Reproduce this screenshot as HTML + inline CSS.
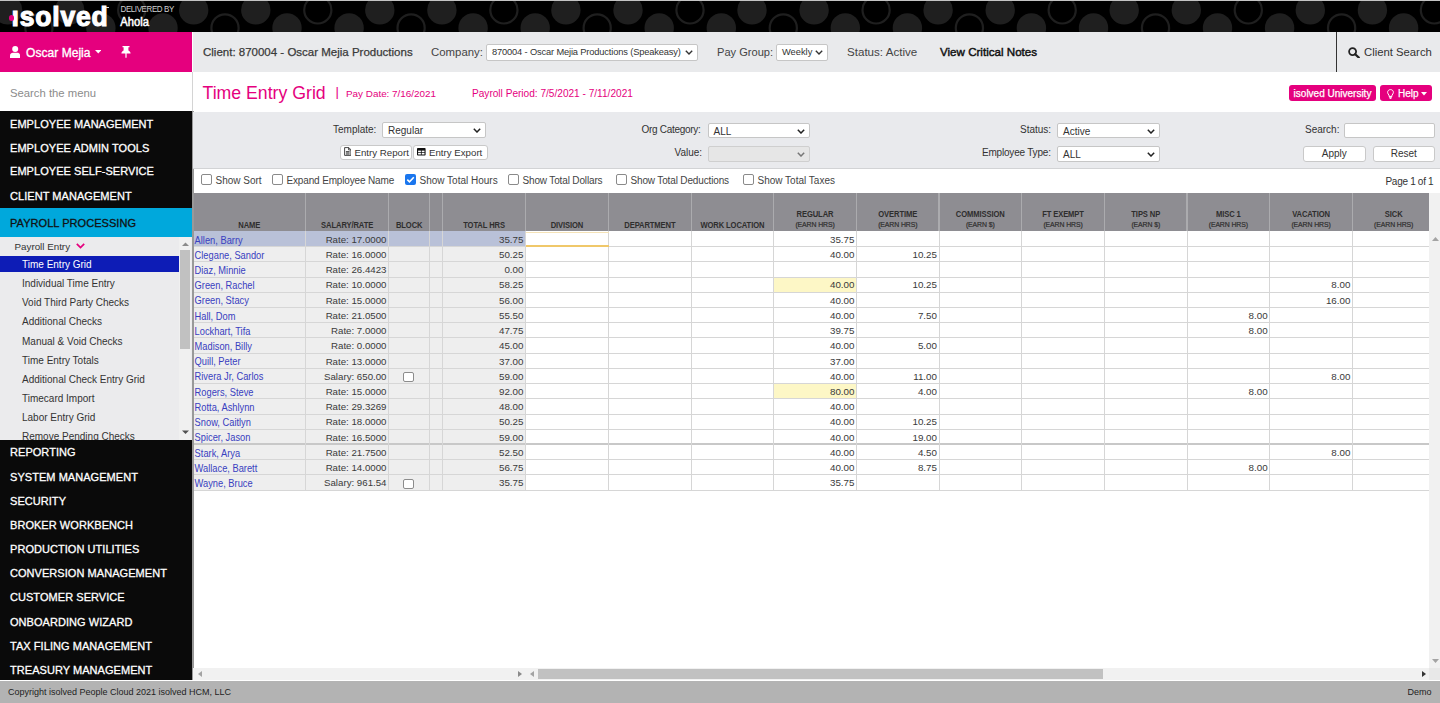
<!DOCTYPE html><html><head><meta charset="utf-8"><style>
*{box-sizing:border-box;margin:0;padding:0}
html,body{width:1440px;height:703px;overflow:hidden;background:#fff;font-family:"Liberation Sans",sans-serif;color:#333}
.a{position:absolute;white-space:nowrap}
.mi{position:absolute;left:10px;color:#fff;font-weight:normal;font-size:11px;line-height:14px;letter-spacing:0.05px;-webkit-text-stroke:0.3px #fff}
.si{position:absolute;left:22px;font-size:10px;color:#333;line-height:12px}
.lbl{position:absolute;font-size:10px;color:#333;line-height:14px;white-space:nowrap}
.sel{position:absolute;background:#fff;border:1px solid #c6c6c6;border-radius:2px;font-size:10px;color:#333;padding-left:5px;line-height:14px;white-space:nowrap}
.sel svg{position:absolute;right:4px;top:5px}
.btn{position:absolute;background:#fff;border:1px solid #c9c9c9;border-radius:3px;font-size:10px;color:#333;text-align:center;line-height:14px;white-space:nowrap}
.cb{position:absolute;width:11px;height:11px;border:1px solid #8a8a8a;border-radius:2px;background:#fff}
.hd{position:absolute;font-size:7.6px;font-weight:bold;color:#2e2e2e;text-align:center;line-height:9px;white-space:nowrap;letter-spacing:-0.1px;transform:scaleY(1.17);transform-origin:50% 7px}
.hd2{color:#2a2a2a !important}
</style></head><body>
<div class="a" style="left:0;top:0;width:1440px;height:32px;background:#000;border-top:1px solid #c4c4c4;overflow:hidden">
<svg width="1440" height="31" style="position:absolute;left:0;top:0"><circle cx="7.6" cy="8.9" r="14.7" fill="#1f1f1f"/><circle cx="69.7" cy="8.9" r="14.7" fill="#1f1f1f"/><circle cx="131.7" cy="8.9" r="13.6" fill="none" stroke="#1f1f1f" stroke-width="2.2"/><circle cx="193.7" cy="8.9" r="14.7" fill="#1f1f1f"/><circle cx="255.8" cy="8.9" r="14.7" fill="#1f1f1f"/><circle cx="317.8" cy="8.9" r="13.6" fill="none" stroke="#1f1f1f" stroke-width="2.2"/><circle cx="379.8" cy="8.9" r="14.7" fill="#1f1f1f"/><circle cx="441.9" cy="8.9" r="14.7" fill="#1f1f1f"/><circle cx="503.9" cy="8.9" r="13.6" fill="none" stroke="#1f1f1f" stroke-width="2.2"/><circle cx="565.9" cy="8.9" r="14.7" fill="#1f1f1f"/><circle cx="628.0" cy="8.9" r="14.7" fill="#1f1f1f"/><circle cx="690.0" cy="8.9" r="13.6" fill="none" stroke="#1f1f1f" stroke-width="2.2"/><circle cx="752.0" cy="8.9" r="14.7" fill="#1f1f1f"/><circle cx="814.1" cy="8.9" r="14.7" fill="#1f1f1f"/><circle cx="876.1" cy="8.9" r="13.6" fill="none" stroke="#1f1f1f" stroke-width="2.2"/><circle cx="938.1" cy="8.9" r="14.7" fill="#1f1f1f"/><circle cx="1000.2" cy="8.9" r="14.7" fill="#1f1f1f"/><circle cx="1062.2" cy="8.9" r="13.6" fill="none" stroke="#1f1f1f" stroke-width="2.2"/><circle cx="1124.2" cy="8.9" r="14.7" fill="#1f1f1f"/><circle cx="1186.3" cy="8.9" r="14.7" fill="#1f1f1f"/><circle cx="1248.3" cy="8.9" r="13.6" fill="none" stroke="#1f1f1f" stroke-width="2.2"/><circle cx="1310.3" cy="8.9" r="14.7" fill="#1f1f1f"/><circle cx="1372.4" cy="8.9" r="14.7" fill="#1f1f1f"/><circle cx="1434.4" cy="8.9" r="13.6" fill="none" stroke="#1f1f1f" stroke-width="2.2"/><circle cx="38.9" cy="26.9" r="13.6" fill="none" stroke="#1f1f1f" stroke-width="2.2"/><circle cx="100.9" cy="26.9" r="14.7" fill="#1f1f1f"/><circle cx="163.0" cy="26.9" r="14.7" fill="#1f1f1f"/><circle cx="225.0" cy="26.9" r="13.6" fill="none" stroke="#1f1f1f" stroke-width="2.2"/><circle cx="287.0" cy="26.9" r="14.7" fill="#1f1f1f"/><circle cx="349.1" cy="26.9" r="14.7" fill="#1f1f1f"/><circle cx="411.1" cy="26.9" r="13.6" fill="none" stroke="#1f1f1f" stroke-width="2.2"/><circle cx="473.1" cy="26.9" r="14.7" fill="#1f1f1f"/><circle cx="535.2" cy="26.9" r="14.7" fill="#1f1f1f"/><circle cx="597.2" cy="26.9" r="13.6" fill="none" stroke="#1f1f1f" stroke-width="2.2"/><circle cx="659.2" cy="26.9" r="14.7" fill="#1f1f1f"/><circle cx="721.3" cy="26.9" r="14.7" fill="#1f1f1f"/><circle cx="783.3" cy="26.9" r="13.6" fill="none" stroke="#1f1f1f" stroke-width="2.2"/><circle cx="845.3" cy="26.9" r="14.7" fill="#1f1f1f"/><circle cx="907.4" cy="26.9" r="14.7" fill="#1f1f1f"/><circle cx="969.4" cy="26.9" r="13.6" fill="none" stroke="#1f1f1f" stroke-width="2.2"/><circle cx="1031.4" cy="26.9" r="14.7" fill="#1f1f1f"/><circle cx="1093.5" cy="26.9" r="14.7" fill="#1f1f1f"/><circle cx="1155.5" cy="26.9" r="13.6" fill="none" stroke="#1f1f1f" stroke-width="2.2"/><circle cx="1217.5" cy="26.9" r="14.7" fill="#1f1f1f"/><circle cx="1279.6" cy="26.9" r="14.7" fill="#1f1f1f"/><circle cx="1341.6" cy="26.9" r="13.6" fill="none" stroke="#1f1f1f" stroke-width="2.2"/><circle cx="1403.6" cy="26.9" r="14.7" fill="#1f1f1f"/></svg>
</div>
<div class="a" style="left:11.6px;top:0.5px;font-size:26.5px;font-weight:bold;color:#fff;letter-spacing:0.8px;line-height:32px;-webkit-text-stroke:1.1px #fff;transform:scaleY(1.06);transform-origin:0 24px">ısolved</div>
<div class="a" style="left:8.6px;top:15.3px;width:5.9px;height:5.9px;border-radius:50%;background:#e5007e;"></div>
<div class="a" style="left:105.5px;top:6.5px;width:3.5px;height:0.8px;background:#ddd"></div>
<div class="a" style="left:120.5px;top:5.4px;font-size:8px;color:#d0d0d0;line-height:10px;letter-spacing:-0.4px;transform:scaleY(1.18);transform-origin:0 8px">DELIVERED BY</div>
<div class="a" style="left:120.3px;top:15px;font-size:11.2px;color:#fff;line-height:14px;-webkit-text-stroke:0.45px #fff;transform:scaleY(1.1);transform-origin:0 11px">Ahola</div>
<div class="a" style="left:0;top:32px;width:192px;height:648px;background:#0a0a0a"></div>
<div class="a" style="left:0;top:32px;width:192px;height:40px;background:#e5007e"></div>
<svg class="a" style="left:10px;top:46px" width="10.2" height="12" viewBox="0 0 10.2 12"><circle cx="5.2" cy="3.1" r="3" fill="#fff"/><path d="M0 12 V9.4 C0 7.7 1.5 6.8 2.8 6.8 H7.4 C8.7 6.8 10.2 7.7 10.2 9.4 V12 Z" fill="#fff"/></svg>
<div class="a" style="left:26px;top:46px;font-size:12px;color:#fff;line-height:14px;letter-spacing:0.05px;-webkit-text-stroke:0.35px #fff">Oscar Mejia</div>
<svg class="a" style="left:94.5px;top:50px" width="6.5" height="4" viewBox="0 0 6.5 4"><path d="M0 0 H6.5 L3.25 3.5 Z" fill="#fff"/></svg>
<svg class="a" style="left:121px;top:46px" width="10" height="12" viewBox="0 0 10 12"><path d="M1.5 0 H8.5 V1.3 H7.4 V4.6 C8.6 5.3 9.6 6.3 9.6 7.6 H5.6 V11.5 L5 12 L4.4 11.5 V7.6 H0.4 C0.4 6.3 1.4 5.3 2.6 4.6 V1.3 H1.5 Z" fill="#fff"/></svg>
<div class="a" style="left:0;top:72px;width:192px;height:39px;background:#fff"></div>
<div class="a" style="left:10px;top:87px;font-size:11.3px;color:#8c8c8c;line-height:13px">Search the menu</div>
<div class="mi" style="top:117.1px">EMPLOYEE MANAGEMENT</div>
<div class="mi" style="top:140.6px">EMPLOYEE ADMIN TOOLS</div>
<div class="mi" style="top:164.3px">EMPLOYEE SELF-SERVICE</div>
<div class="mi" style="top:188.6px">CLIENT MANAGEMENT</div>
<div class="a" style="left:0;top:208px;width:192px;height:29.7px;background:#00a8dc"></div>
<div class="mi" style="top:216px;color:#111;-webkit-text-stroke:0.3px #111">PAYROLL PROCESSING</div>
<div class="a" style="left:0;top:237px;width:192px;height:203px;background:#ebebed;overflow:hidden">
<div class="a" style="left:14.5px;top:4px;font-size:9.8px;color:#333;line-height:12px">Payroll Entry</div>
<svg class="a" style="left:76px;top:6px" width="9" height="6" viewBox="0 0 9 6"><path d="M0.8 0.8 L4.5 4.6 L8.2 0.8" fill="none" stroke="#e5007e" stroke-width="1.7"/></svg>
<div class="a" style="left:0;top:18.5px;width:179px;height:16px;background:#0d1cb6"></div>
<div class="si" style="top:22.3px;color:#fff">Time Entry Grid</div>
<div class="si" style="top:41.3px;color:#333">Individual Time Entry</div>
<div class="si" style="top:60.4px;color:#333">Void Third Party Checks</div>
<div class="si" style="top:79.4px;color:#333">Additional Checks</div>
<div class="si" style="top:98.5px;color:#333">Manual &amp; Void Checks</div>
<div class="si" style="top:117.5px;color:#333">Time Entry Totals</div>
<div class="si" style="top:136.5px;color:#333">Additional Check Entry Grid</div>
<div class="si" style="top:155.6px;color:#333">Timecard Import</div>
<div class="si" style="top:174.6px;color:#333">Labor Entry Grid</div>
<div class="si" style="top:193.7px;color:#333">Remove Pending Checks</div>
<div class="a" style="left:178.7px;top:0;width:12px;height:203px;background:#f0f0f0"></div>
<svg class="a" style="left:182px;top:5px" width="7" height="5"><path d="M0 4 L3.5 0.5 L7 4 Z" fill="#8a8a8a"/></svg>
<div class="a" style="left:180.4px;top:13px;width:9.4px;height:99px;background:#c1c1c1"></div>
<svg class="a" style="left:182px;top:193px" width="7" height="5"><path d="M0 0.5 L3.5 4 L7 0.5 Z" fill="#505050"/></svg>
</div>
<div class="mi" style="top:445.4px">REPORTING</div>
<div class="mi" style="top:469.6px">SYSTEM MANAGEMENT</div>
<div class="mi" style="top:493.7px">SECURITY</div>
<div class="mi" style="top:517.9px">BROKER WORKBENCH</div>
<div class="mi" style="top:542.1px">PRODUCTION UTILITIES</div>
<div class="mi" style="top:566.2px">CONVERSION MANAGEMENT</div>
<div class="mi" style="top:590.4px">CUSTOMER SERVICE</div>
<div class="mi" style="top:614.6px">ONBOARDING WIZARD</div>
<div class="mi" style="top:638.8px">TAX FILING MANAGEMENT</div>
<div class="mi" style="top:662.9px">TREASURY MANAGEMENT</div>
<div class="a" style="left:192px;top:72px;width:1px;height:39px;background:#d4d4d4"></div>
<div class="a" style="left:192px;top:111px;width:1.5px;height:569px;background:#999"></div>
<div class="a" style="left:193px;top:32px;width:1247px;height:40px;background:#e9eaec"></div>
<div class="a" style="left:203px;top:45px;font-size:11.5px;color:#3a3a3a;line-height:14px;-webkit-text-stroke:0.25px #3a3a3a">Client: 870004 - Oscar Mejia Productions</div>
<div class="a" style="left:431px;top:45px;font-size:11.4px;color:#444;line-height:14px">Company:</div>
<div class="sel" style="left:486px;top:44px;width:212px;height:17px;font-size:9.3px;padding-left:5px;line-height:14px;letter-spacing:-0.15px">870004 - Oscar Mejia Productions (Speakeasy)<svg width="8" height="5" viewBox="0 0 8 5"><path d="M0.8 0.8 L4 4 L7.2 0.8" fill="none" stroke="#333" stroke-width="1.4"/></svg></div>
<div class="a" style="left:717px;top:45px;font-size:11.1px;color:#444;line-height:14px">Pay Group:</div>
<div class="sel" style="left:776px;top:44px;width:52px;height:17px;font-size:9.3px;padding-left:5px;line-height:14px">Weekly<svg width="8" height="5" viewBox="0 0 8 5"><path d="M0.8 0.8 L4 4 L7.2 0.8" fill="none" stroke="#333" stroke-width="1.4"/></svg></div>
<div class="a" style="left:847px;top:45px;font-size:11.6px;color:#444;line-height:14px">Status: Active</div>
<div class="a" style="left:940px;top:45px;font-size:11.6px;color:#111;line-height:14px;-webkit-text-stroke:0.45px #111">View Critical Notes</div>
<div class="a" style="left:1336px;top:32px;width:1px;height:40px;background:#333"></div>
<svg class="a" style="left:1348px;top:47px" width="12" height="11" viewBox="0 0 12 11"><circle cx="4.6" cy="4.6" r="3.5" fill="none" stroke="#222" stroke-width="1.8"/><path d="M7.2 7.2 L10.8 10.6" stroke="#222" stroke-width="2.2" stroke-linecap="round"/></svg>
<div class="a" style="left:1364px;top:45px;font-size:11.3px;color:#333;line-height:14px">Client Search</div>
<div class="a" style="left:202.5px;top:83px;font-size:17.7px;color:#e5007e;line-height:20px">Time Entry Grid</div>
<div class="a" style="left:335.5px;top:85.3px;font-size:13px;color:#e5007e;line-height:14px">|</div>
<div class="a" style="left:346px;top:88px;font-size:9.9px;color:#e5007e;line-height:12px">Pay Date: 7/16/2021</div>
<div class="a" style="left:472px;top:88px;font-size:10.1px;color:#e5007e;line-height:12px">Payroll Period: 7/5/2021 - 7/11/2021</div>
<div class="a" style="left:1289px;top:85px;width:87px;height:16.3px;background:#e5007e;border-radius:3px;color:#fff;font-size:10px;line-height:18px;text-align:center;-webkit-text-stroke:0.25px #fff">isolved University</div>
<div class="a" style="left:1380px;top:85px;width:52px;height:16.3px;background:#e5007e;border-radius:3px;color:#fff;font-size:10px;line-height:18px;-webkit-text-stroke:0.25px #fff"><svg style="position:absolute;left:6.5px;top:3.5px" width="7" height="10" viewBox="0 0 7 10"><path d="M3.5 0.6 C1.8 0.6 0.6 1.8 0.6 3.4 C0.6 4.6 1.5 5.3 2 6.2 V7.4 H5 V6.2 C5.5 5.3 6.4 4.6 6.4 3.4 C6.4 1.8 5.2 0.6 3.5 0.6 Z M2.2 8.3 H4.8 M2.6 9.4 H4.4" fill="none" stroke="#fff" stroke-width="1"/></svg><span style="position:absolute;left:18px">Help</span><svg style="position:absolute;left:40.5px;top:7px" width="6" height="4"><path d="M0 0 H6 L3 3.5 Z" fill="#fff"/></svg></div>
<div class="a" style="left:193px;top:111.8px;width:1247px;height:57.2px;background:#e9eaed;border-bottom:1px solid #d2d3d5"></div>
<div class="lbl" style="left:333px;top:123px">Template:</div>
<div class="sel" style="left:382px;top:122px;width:104px;height:16px;padding-left:5px;line-height:15px">Regular<svg width="8" height="5" viewBox="0 0 8 5"><path d="M0.8 0.8 L4 4 L7.2 0.8" fill="none" stroke="#222" stroke-width="1.5"/></svg></div>
<div class="btn" style="left:340px;top:144.5px;width:72px;height:15px;line-height:13px;text-align:left;padding-left:13.5px;font-size:9.7px">Entry Report</div>
<svg class="a" style="left:343.5px;top:147px" width="7.5" height="9" viewBox="0 0 7.5 9"><path d="M0.6 0.6 H4.8 L6.9 2.7 V8.4 H0.6 Z M4.6 0.6 V2.9 H6.9 M1.9 4.6 H5.6 M1.9 5.9 H5.6 M1.9 7.1 H5.6" fill="none" stroke="#333" stroke-width="0.9"/></svg>
<div class="btn" style="left:413px;top:144.5px;width:75px;height:15px;line-height:13px;text-align:left;padding-left:15px;font-size:9.7px">Entry Export</div>
<svg class="a" style="left:417.4px;top:148px" width="8.6" height="7.5" viewBox="0 0 8.6 7.5"><rect x="0" y="0" width="8.6" height="7.5" rx="0.8" fill="#111"/><rect x="1.1" y="2.6" width="2.8" height="1.6" fill="#fff"/><rect x="4.7" y="2.6" width="2.8" height="1.6" fill="#fff"/><rect x="1.1" y="4.9" width="2.8" height="1.6" fill="#fff"/><rect x="4.7" y="4.9" width="2.8" height="1.6" fill="#fff"/></svg>
<div class="lbl" style="left:641.5px;top:123px;letter-spacing:-0.3px">Org Category:</div>
<div class="sel" style="left:707.5px;top:122.5px;width:102px;height:15.5px;padding-left:5px;line-height:15px">ALL<svg width="8" height="5" viewBox="0 0 8 5"><path d="M0.8 0.8 L4 4 L7.2 0.8" fill="none" stroke="#222" stroke-width="1.5"/></svg></div>
<div class="lbl" style="left:674.5px;top:146px">Value:</div>
<div class="sel" style="left:707.5px;top:145.5px;width:102px;height:16px;background:#e6e6e6;border-color:#cfcfcf"><svg width="8" height="5" viewBox="0 0 8 5"><path d="M0.8 0.8 L4 4 L7.2 0.8" fill="none" stroke="#777" stroke-width="1.5"/></svg></div>
<div class="lbl" style="left:1020px;top:123px">Status:</div>
<div class="sel" style="left:1057px;top:122.5px;width:103px;height:15.5px;padding-left:5px;line-height:15px">Active<svg width="8" height="5" viewBox="0 0 8 5"><path d="M0.8 0.8 L4 4 L7.2 0.8" fill="none" stroke="#222" stroke-width="1.5"/></svg></div>
<div class="lbl" style="left:982px;top:146px;letter-spacing:-0.2px">Employee Type:</div>
<div class="sel" style="left:1057px;top:145.5px;width:103px;height:16px;padding-left:5px;line-height:15px">ALL<svg width="8" height="5" viewBox="0 0 8 5"><path d="M0.8 0.8 L4 4 L7.2 0.8" fill="none" stroke="#222" stroke-width="1.5"/></svg></div>
<div class="lbl" style="left:1305px;top:123px">Search:</div>
<div class="sel" style="left:1344px;top:122.5px;width:90.5px;height:15.5px"></div>
<div class="btn" style="left:1303px;top:145.5px;width:62.5px;height:16px">Apply</div>
<div class="btn" style="left:1373px;top:145.5px;width:61.5px;height:16px">Reset</div>
<div class="cb" style="left:201.3px;top:174px"></div>
<div class="lbl" style="left:215.5px;top:174px;color:#444;letter-spacing:0px">Show Sort</div>
<div class="cb" style="left:272px;top:174px"></div>
<div class="lbl" style="left:286.5px;top:174px;color:#444;letter-spacing:-0.15px">Expand Employee Name</div>
<svg class="a" style="left:405px;top:174px" width="11" height="11" viewBox="0 0 11 11"><rect x="0" y="0" width="11" height="11" rx="2" fill="#1a76ee"/><path d="M2.3 5.6 L4.5 7.8 L8.8 3.3" fill="none" stroke="#fff" stroke-width="1.6"/></svg>
<div class="lbl" style="left:419.5px;top:174px;color:#444;letter-spacing:0px">Show Total Hours</div>
<div class="cb" style="left:508px;top:174px"></div>
<div class="lbl" style="left:522.5px;top:174px;color:#444;letter-spacing:-0.15px">Show Total Dollars</div>
<div class="cb" style="left:616.3px;top:174px"></div>
<div class="lbl" style="left:630.5px;top:174px;color:#444;letter-spacing:-0.15px">Show Total Deductions</div>
<div class="cb" style="left:743px;top:174px"></div>
<div class="lbl" style="left:757.5px;top:174px;color:#444;letter-spacing:0px">Show Total Taxes</div>
<div class="lbl" style="left:1385.5px;top:175px;letter-spacing:-0.3px">Page 1 of 1</div>
<div class="a" style="left:193.8px;top:193px;width:1235.2px;height:38.400000000000006px;background:#8e8d92"></div>
<div class="hd" style="left:193px;width:112.60000000000002px;top:220.8px">NAME</div>
<div class="a" style="left:304.85px;top:193px;width:1.5px;height:38.400000000000006px;background:#ababae"></div>
<div class="hd" style="left:305.6px;width:83.09999999999997px;top:220.8px">SALARY/RATE</div>
<div class="a" style="left:387.95px;top:193px;width:1.5px;height:38.400000000000006px;background:#ababae"></div>
<div class="hd" style="left:388.7px;width:41.0px;top:220.8px">BLOCK</div>
<div class="a" style="left:428.95px;top:193px;width:1.5px;height:38.400000000000006px;background:#ababae"></div>
<div class="a" style="left:441.85px;top:193px;width:1.5px;height:38.400000000000006px;background:#ababae"></div>
<div class="hd" style="left:442.6px;width:82.89999999999998px;top:220.8px">TOTAL HRS</div>
<div class="a" style="left:524.75px;top:193px;width:1.5px;height:38.400000000000006px;background:#ababae"></div>
<div class="hd" style="left:525.5px;width:83.0px;top:220.8px">DIVISION</div>
<div class="a" style="left:607.75px;top:193px;width:1.5px;height:38.400000000000006px;background:#ababae"></div>
<div class="hd" style="left:608.5px;width:82.79999999999995px;top:220.8px">DEPARTMENT</div>
<div class="a" style="left:690.55px;top:193px;width:1.5px;height:38.400000000000006px;background:#ababae"></div>
<div class="hd" style="left:691.3px;width:82.20000000000005px;top:220.8px">WORK LOCATION</div>
<div class="a" style="left:772.75px;top:193px;width:1.5px;height:38.400000000000006px;background:#ababae"></div>
<div class="hd" style="left:773.5px;width:83.0px;top:210.3px">REGULAR</div>
<div class="hd" style="left:773.5px;width:83.0px;top:220.20000000000002px;font-size:6.9px;font-weight:normal;-webkit-text-stroke:0.2px #333">(EARN HRS)</div>
<div class="a" style="left:855.75px;top:193px;width:1.5px;height:38.400000000000006px;background:#ababae"></div>
<div class="hd" style="left:856.5px;width:82.5px;top:210.3px">OVERTIME</div>
<div class="hd" style="left:856.5px;width:82.5px;top:220.20000000000002px;font-size:6.9px;font-weight:normal;-webkit-text-stroke:0.2px #333">(EARN HRS)</div>
<div class="a" style="left:938.25px;top:193px;width:1.5px;height:38.400000000000006px;background:#ababae"></div>
<div class="hd" style="left:939px;width:82.5px;top:210.3px">COMMISSION</div>
<div class="hd" style="left:939px;width:82.5px;top:220.20000000000002px;font-size:6.9px;font-weight:normal;-webkit-text-stroke:0.2px #333">(EARN $)</div>
<div class="a" style="left:1020.75px;top:193px;width:1.5px;height:38.400000000000006px;background:#ababae"></div>
<div class="hd" style="left:1021.5px;width:83.0px;top:210.3px">FT EXEMPT</div>
<div class="hd" style="left:1021.5px;width:83.0px;top:220.20000000000002px;font-size:6.9px;font-weight:normal;-webkit-text-stroke:0.2px #333">(EARN HRS)</div>
<div class="a" style="left:1103.75px;top:193px;width:1.5px;height:38.400000000000006px;background:#ababae"></div>
<div class="hd" style="left:1104.5px;width:82.5px;top:210.3px">TIPS NP</div>
<div class="hd" style="left:1104.5px;width:82.5px;top:220.20000000000002px;font-size:6.9px;font-weight:normal;-webkit-text-stroke:0.2px #333">(EARN $)</div>
<div class="a" style="left:1186.25px;top:193px;width:1.5px;height:38.400000000000006px;background:#ababae"></div>
<div class="hd" style="left:1187px;width:82.59999999999991px;top:210.3px">MISC 1</div>
<div class="hd" style="left:1187px;width:82.59999999999991px;top:220.20000000000002px;font-size:6.9px;font-weight:normal;-webkit-text-stroke:0.2px #333">(EARN HRS)</div>
<div class="a" style="left:1268.85px;top:193px;width:1.5px;height:38.400000000000006px;background:#ababae"></div>
<div class="hd" style="left:1269.6px;width:82.80000000000018px;top:210.3px">VACATION</div>
<div class="hd" style="left:1269.6px;width:82.80000000000018px;top:220.20000000000002px;font-size:6.9px;font-weight:normal;-webkit-text-stroke:0.2px #333">(EARN HRS)</div>
<div class="a" style="left:1351.65px;top:193px;width:1.5px;height:38.400000000000006px;background:#ababae"></div>
<div class="hd" style="left:1352.4px;width:82.59999999999991px;top:210.3px">SICK</div>
<div class="hd" style="left:1352.4px;width:82.59999999999991px;top:220.20000000000002px;font-size:6.9px;font-weight:normal;-webkit-text-stroke:0.2px #333">(EARN HRS)</div>
<div class="a" style="left:193.8px;top:231.40px;width:331.7px;height:15.32px;background:#b9c1d8"></div>
<div class="a" style="left:193.8px;top:246.62px;width:331.7px;height:15.32px;background:#eeeeee"></div>
<div class="a" style="left:193.8px;top:261.84px;width:331.7px;height:15.32px;background:#eeeeee"></div>
<div class="a" style="left:193.8px;top:277.06px;width:331.7px;height:15.32px;background:#eeeeee"></div>
<div class="a" style="left:774px;top:277.56px;width:82px;height:14.72px;background:#fdf7c6"></div>
<div class="a" style="left:193.8px;top:292.28px;width:331.7px;height:15.32px;background:#eeeeee"></div>
<div class="a" style="left:193.8px;top:307.50px;width:331.7px;height:15.32px;background:#eeeeee"></div>
<div class="a" style="left:193.8px;top:322.72px;width:331.7px;height:15.32px;background:#eeeeee"></div>
<div class="a" style="left:193.8px;top:337.94px;width:331.7px;height:15.32px;background:#eeeeee"></div>
<div class="a" style="left:193.8px;top:353.16px;width:331.7px;height:15.32px;background:#eeeeee"></div>
<div class="a" style="left:193.8px;top:368.38px;width:331.7px;height:15.32px;background:#eeeeee"></div>
<div class="a" style="left:193.8px;top:383.60px;width:331.7px;height:15.32px;background:#eeeeee"></div>
<div class="a" style="left:774px;top:384.10px;width:82px;height:14.72px;background:#fdf7c6"></div>
<div class="a" style="left:193.8px;top:398.82px;width:331.7px;height:15.32px;background:#eeeeee"></div>
<div class="a" style="left:193.8px;top:414.04px;width:331.7px;height:15.32px;background:#eeeeee"></div>
<div class="a" style="left:193.8px;top:429.26px;width:331.7px;height:15.32px;background:#eeeeee"></div>
<div class="a" style="left:193.8px;top:444.48px;width:331.7px;height:15.32px;background:#eeeeee"></div>
<div class="a" style="left:193.8px;top:459.70px;width:331.7px;height:15.32px;background:#eeeeee"></div>
<div class="a" style="left:193.8px;top:474.92px;width:331.7px;height:15.32px;background:#eeeeee"></div>
<div class="a" style="left:193.8px;top:246.12px;width:1235.2px;height:1px;background:#d6d6d6"></div>
<div class="a" style="left:193.8px;top:261.34px;width:1235.2px;height:1px;background:#d6d6d6"></div>
<div class="a" style="left:193.8px;top:276.56px;width:1235.2px;height:1px;background:#d6d6d6"></div>
<div class="a" style="left:193.8px;top:291.78px;width:1235.2px;height:1px;background:#d6d6d6"></div>
<div class="a" style="left:193.8px;top:307.00px;width:1235.2px;height:1px;background:#d6d6d6"></div>
<div class="a" style="left:193.8px;top:322.22px;width:1235.2px;height:1px;background:#d6d6d6"></div>
<div class="a" style="left:193.8px;top:337.44px;width:1235.2px;height:1px;background:#d6d6d6"></div>
<div class="a" style="left:193.8px;top:352.66px;width:1235.2px;height:1px;background:#d6d6d6"></div>
<div class="a" style="left:193.8px;top:367.88px;width:1235.2px;height:1px;background:#d6d6d6"></div>
<div class="a" style="left:193.8px;top:383.10px;width:1235.2px;height:1px;background:#d6d6d6"></div>
<div class="a" style="left:193.8px;top:398.32px;width:1235.2px;height:1px;background:#d6d6d6"></div>
<div class="a" style="left:193.8px;top:413.54px;width:1235.2px;height:1px;background:#d6d6d6"></div>
<div class="a" style="left:193.8px;top:428.76px;width:1235.2px;height:1px;background:#d6d6d6"></div>
<div class="a" style="left:193.8px;top:443.48px;width:1235.2px;height:2px;background:#c8c8c8"></div>
<div class="a" style="left:193.8px;top:459.20px;width:1235.2px;height:1px;background:#d6d6d6"></div>
<div class="a" style="left:193.8px;top:474.42px;width:1235.2px;height:1px;background:#d6d6d6"></div>
<div class="a" style="left:193.8px;top:489.64px;width:1235.2px;height:1px;background:#d6d6d6"></div>
<div class="a" style="left:194.6px;top:235.50px;font-size:9.3px;line-height:11px;color:#3840c0;transform:scaleY(1.13);transform-origin:0 8.5px">Allen, Barry</div>
<div class="a" style="right:1053.5px;top:233.75px;font-size:9.7px;line-height:11px;color:#3a3a3a">Rate: 17.0000</div>
<div class="a" style="right:916.5px;top:233.75px;font-size:9.8px;line-height:11px;color:#3a3a3a">35.75</div>
<div class="a" style="right:585.5px;top:233.75px;font-size:9.8px;line-height:11px;color:#3a3a3a">35.75</div>
<div class="a" style="left:194.6px;top:250.72px;font-size:9.3px;line-height:11px;color:#3840c0;transform:scaleY(1.13);transform-origin:0 8.5px">Clegane, Sandor</div>
<div class="a" style="right:1053.5px;top:248.97px;font-size:9.7px;line-height:11px;color:#3a3a3a">Rate: 16.0000</div>
<div class="a" style="right:916.5px;top:248.97px;font-size:9.8px;line-height:11px;color:#3a3a3a">50.25</div>
<div class="a" style="right:585.5px;top:248.97px;font-size:9.8px;line-height:11px;color:#3a3a3a">40.00</div>
<div class="a" style="right:503.0px;top:248.97px;font-size:9.8px;line-height:11px;color:#3a3a3a">10.25</div>
<div class="a" style="left:194.6px;top:265.94px;font-size:9.3px;line-height:11px;color:#3840c0;transform:scaleY(1.13);transform-origin:0 8.5px">Diaz, Minnie</div>
<div class="a" style="right:1053.5px;top:264.19px;font-size:9.7px;line-height:11px;color:#3a3a3a">Rate: 26.4423</div>
<div class="a" style="right:916.5px;top:264.19px;font-size:9.8px;line-height:11px;color:#3a3a3a">0.00</div>
<div class="a" style="left:194.6px;top:281.16px;font-size:9.3px;line-height:11px;color:#3840c0;transform:scaleY(1.13);transform-origin:0 8.5px">Green, Rachel</div>
<div class="a" style="right:1053.5px;top:279.41px;font-size:9.7px;line-height:11px;color:#3a3a3a">Rate: 10.0000</div>
<div class="a" style="right:916.5px;top:279.41px;font-size:9.8px;line-height:11px;color:#3a3a3a">58.25</div>
<div class="a" style="right:585.5px;top:279.41px;font-size:9.8px;line-height:11px;color:#3a3a3a">40.00</div>
<div class="a" style="right:503.0px;top:279.41px;font-size:9.8px;line-height:11px;color:#3a3a3a">10.25</div>
<div class="a" style="right:89.6px;top:279.41px;font-size:9.8px;line-height:11px;color:#3a3a3a">8.00</div>
<div class="a" style="left:194.6px;top:296.38px;font-size:9.3px;line-height:11px;color:#3840c0;transform:scaleY(1.13);transform-origin:0 8.5px">Green, Stacy</div>
<div class="a" style="right:1053.5px;top:294.63px;font-size:9.7px;line-height:11px;color:#3a3a3a">Rate: 15.0000</div>
<div class="a" style="right:916.5px;top:294.63px;font-size:9.8px;line-height:11px;color:#3a3a3a">56.00</div>
<div class="a" style="right:585.5px;top:294.63px;font-size:9.8px;line-height:11px;color:#3a3a3a">40.00</div>
<div class="a" style="right:89.6px;top:294.63px;font-size:9.8px;line-height:11px;color:#3a3a3a">16.00</div>
<div class="a" style="left:194.6px;top:311.60px;font-size:9.3px;line-height:11px;color:#3840c0;transform:scaleY(1.13);transform-origin:0 8.5px">Hall, Dom</div>
<div class="a" style="right:1053.5px;top:309.85px;font-size:9.7px;line-height:11px;color:#3a3a3a">Rate: 21.0500</div>
<div class="a" style="right:916.5px;top:309.85px;font-size:9.8px;line-height:11px;color:#3a3a3a">55.50</div>
<div class="a" style="right:585.5px;top:309.85px;font-size:9.8px;line-height:11px;color:#3a3a3a">40.00</div>
<div class="a" style="right:503.0px;top:309.85px;font-size:9.8px;line-height:11px;color:#3a3a3a">7.50</div>
<div class="a" style="right:172.4px;top:309.85px;font-size:9.8px;line-height:11px;color:#3a3a3a">8.00</div>
<div class="a" style="left:194.6px;top:326.82px;font-size:9.3px;line-height:11px;color:#3840c0;transform:scaleY(1.13);transform-origin:0 8.5px">Lockhart, Tifa</div>
<div class="a" style="right:1053.5px;top:325.07px;font-size:9.7px;line-height:11px;color:#3a3a3a">Rate: 7.0000</div>
<div class="a" style="right:916.5px;top:325.07px;font-size:9.8px;line-height:11px;color:#3a3a3a">47.75</div>
<div class="a" style="right:585.5px;top:325.07px;font-size:9.8px;line-height:11px;color:#3a3a3a">39.75</div>
<div class="a" style="right:172.4px;top:325.07px;font-size:9.8px;line-height:11px;color:#3a3a3a">8.00</div>
<div class="a" style="left:194.6px;top:342.04px;font-size:9.3px;line-height:11px;color:#3840c0;transform:scaleY(1.13);transform-origin:0 8.5px">Madison, Billy</div>
<div class="a" style="right:1053.5px;top:340.29px;font-size:9.7px;line-height:11px;color:#3a3a3a">Rate: 0.0000</div>
<div class="a" style="right:916.5px;top:340.29px;font-size:9.8px;line-height:11px;color:#3a3a3a">45.00</div>
<div class="a" style="right:585.5px;top:340.29px;font-size:9.8px;line-height:11px;color:#3a3a3a">40.00</div>
<div class="a" style="right:503.0px;top:340.29px;font-size:9.8px;line-height:11px;color:#3a3a3a">5.00</div>
<div class="a" style="left:194.6px;top:357.26px;font-size:9.3px;line-height:11px;color:#3840c0;transform:scaleY(1.13);transform-origin:0 8.5px">Quill, Peter</div>
<div class="a" style="right:1053.5px;top:355.51px;font-size:9.7px;line-height:11px;color:#3a3a3a">Rate: 13.0000</div>
<div class="a" style="right:916.5px;top:355.51px;font-size:9.8px;line-height:11px;color:#3a3a3a">37.00</div>
<div class="a" style="right:585.5px;top:355.51px;font-size:9.8px;line-height:11px;color:#3a3a3a">37.00</div>
<div class="a" style="left:194.6px;top:372.48px;font-size:9.3px;line-height:11px;color:#3840c0;transform:scaleY(1.13);transform-origin:0 8.5px">Rivera Jr, Carlos</div>
<div class="a" style="right:1053.5px;top:370.73px;font-size:9.7px;line-height:11px;color:#3a3a3a">Salary: 650.00</div>
<div class="a" style="left:403.3px;top:372.28px;width:10.3px;height:10px;border:1px solid #8c8c8c;border-radius:2px;background:#fff"></div>
<div class="a" style="right:916.5px;top:370.73px;font-size:9.8px;line-height:11px;color:#3a3a3a">59.00</div>
<div class="a" style="right:585.5px;top:370.73px;font-size:9.8px;line-height:11px;color:#3a3a3a">40.00</div>
<div class="a" style="right:503.0px;top:370.73px;font-size:9.8px;line-height:11px;color:#3a3a3a">11.00</div>
<div class="a" style="right:89.6px;top:370.73px;font-size:9.8px;line-height:11px;color:#3a3a3a">8.00</div>
<div class="a" style="left:194.6px;top:387.70px;font-size:9.3px;line-height:11px;color:#3840c0;transform:scaleY(1.13);transform-origin:0 8.5px">Rogers, Steve</div>
<div class="a" style="right:1053.5px;top:385.95px;font-size:9.7px;line-height:11px;color:#3a3a3a">Rate: 15.0000</div>
<div class="a" style="right:916.5px;top:385.95px;font-size:9.8px;line-height:11px;color:#3a3a3a">92.00</div>
<div class="a" style="right:585.5px;top:385.95px;font-size:9.8px;line-height:11px;color:#3a3a3a">80.00</div>
<div class="a" style="right:503.0px;top:385.95px;font-size:9.8px;line-height:11px;color:#3a3a3a">4.00</div>
<div class="a" style="right:172.4px;top:385.95px;font-size:9.8px;line-height:11px;color:#3a3a3a">8.00</div>
<div class="a" style="left:194.6px;top:402.92px;font-size:9.3px;line-height:11px;color:#3840c0;transform:scaleY(1.13);transform-origin:0 8.5px">Rotta, Ashlynn</div>
<div class="a" style="right:1053.5px;top:401.17px;font-size:9.7px;line-height:11px;color:#3a3a3a">Rate: 29.3269</div>
<div class="a" style="right:916.5px;top:401.17px;font-size:9.8px;line-height:11px;color:#3a3a3a">48.00</div>
<div class="a" style="right:585.5px;top:401.17px;font-size:9.8px;line-height:11px;color:#3a3a3a">40.00</div>
<div class="a" style="left:194.6px;top:418.14px;font-size:9.3px;line-height:11px;color:#3840c0;transform:scaleY(1.13);transform-origin:0 8.5px">Snow, Caitlyn</div>
<div class="a" style="right:1053.5px;top:416.39px;font-size:9.7px;line-height:11px;color:#3a3a3a">Rate: 18.0000</div>
<div class="a" style="right:916.5px;top:416.39px;font-size:9.8px;line-height:11px;color:#3a3a3a">50.25</div>
<div class="a" style="right:585.5px;top:416.39px;font-size:9.8px;line-height:11px;color:#3a3a3a">40.00</div>
<div class="a" style="right:503.0px;top:416.39px;font-size:9.8px;line-height:11px;color:#3a3a3a">10.25</div>
<div class="a" style="left:194.6px;top:433.36px;font-size:9.3px;line-height:11px;color:#3840c0;transform:scaleY(1.13);transform-origin:0 8.5px">Spicer, Jason</div>
<div class="a" style="right:1053.5px;top:431.61px;font-size:9.7px;line-height:11px;color:#3a3a3a">Rate: 16.5000</div>
<div class="a" style="right:916.5px;top:431.61px;font-size:9.8px;line-height:11px;color:#3a3a3a">59.00</div>
<div class="a" style="right:585.5px;top:431.61px;font-size:9.8px;line-height:11px;color:#3a3a3a">40.00</div>
<div class="a" style="right:503.0px;top:431.61px;font-size:9.8px;line-height:11px;color:#3a3a3a">19.00</div>
<div class="a" style="left:194.6px;top:448.58px;font-size:9.3px;line-height:11px;color:#3840c0;transform:scaleY(1.13);transform-origin:0 8.5px">Stark, Arya</div>
<div class="a" style="right:1053.5px;top:446.83px;font-size:9.7px;line-height:11px;color:#3a3a3a">Rate: 21.7500</div>
<div class="a" style="right:916.5px;top:446.83px;font-size:9.8px;line-height:11px;color:#3a3a3a">52.50</div>
<div class="a" style="right:585.5px;top:446.83px;font-size:9.8px;line-height:11px;color:#3a3a3a">40.00</div>
<div class="a" style="right:503.0px;top:446.83px;font-size:9.8px;line-height:11px;color:#3a3a3a">4.50</div>
<div class="a" style="right:89.6px;top:446.83px;font-size:9.8px;line-height:11px;color:#3a3a3a">8.00</div>
<div class="a" style="left:194.6px;top:463.80px;font-size:9.3px;line-height:11px;color:#3840c0;transform:scaleY(1.13);transform-origin:0 8.5px">Wallace, Barett</div>
<div class="a" style="right:1053.5px;top:462.05px;font-size:9.7px;line-height:11px;color:#3a3a3a">Rate: 14.0000</div>
<div class="a" style="right:916.5px;top:462.05px;font-size:9.8px;line-height:11px;color:#3a3a3a">56.75</div>
<div class="a" style="right:585.5px;top:462.05px;font-size:9.8px;line-height:11px;color:#3a3a3a">40.00</div>
<div class="a" style="right:503.0px;top:462.05px;font-size:9.8px;line-height:11px;color:#3a3a3a">8.75</div>
<div class="a" style="right:172.4px;top:462.05px;font-size:9.8px;line-height:11px;color:#3a3a3a">8.00</div>
<div class="a" style="left:194.6px;top:479.02px;font-size:9.3px;line-height:11px;color:#3840c0;transform:scaleY(1.13);transform-origin:0 8.5px">Wayne, Bruce</div>
<div class="a" style="right:1053.5px;top:477.27px;font-size:9.7px;line-height:11px;color:#3a3a3a">Salary: 961.54</div>
<div class="a" style="left:403.3px;top:478.82px;width:10.3px;height:10px;border:1px solid #8c8c8c;border-radius:2px;background:#fff"></div>
<div class="a" style="right:916.5px;top:477.27px;font-size:9.8px;line-height:11px;color:#3a3a3a">35.75</div>
<div class="a" style="right:585.5px;top:477.27px;font-size:9.8px;line-height:11px;color:#3a3a3a">35.75</div>
<div class="a" style="left:305.1px;top:231.4px;width:1px;height:258.74px;background:#d6d6d6"></div>
<div class="a" style="left:388.2px;top:231.4px;width:1px;height:258.74px;background:#d6d6d6"></div>
<div class="a" style="left:429.2px;top:231.4px;width:1px;height:258.74px;background:#d6d6d6"></div>
<div class="a" style="left:442.1px;top:231.4px;width:1px;height:258.74px;background:#d6d6d6"></div>
<div class="a" style="left:525.0px;top:231.4px;width:1px;height:258.74px;background:#d6d6d6"></div>
<div class="a" style="left:608.0px;top:231.4px;width:1px;height:258.74px;background:#d6d6d6"></div>
<div class="a" style="left:690.8px;top:231.4px;width:1px;height:258.74px;background:#d6d6d6"></div>
<div class="a" style="left:773.0px;top:231.4px;width:1px;height:258.74px;background:#d6d6d6"></div>
<div class="a" style="left:856.0px;top:231.4px;width:1px;height:258.74px;background:#d6d6d6"></div>
<div class="a" style="left:938.5px;top:231.4px;width:1px;height:258.74px;background:#d6d6d6"></div>
<div class="a" style="left:1021.0px;top:231.4px;width:1px;height:258.74px;background:#d6d6d6"></div>
<div class="a" style="left:1104.0px;top:231.4px;width:1px;height:258.74px;background:#d6d6d6"></div>
<div class="a" style="left:1186.5px;top:231.4px;width:1px;height:258.74px;background:#d6d6d6"></div>
<div class="a" style="left:1269.1px;top:231.4px;width:1px;height:258.74px;background:#d6d6d6"></div>
<div class="a" style="left:1351.9px;top:231.4px;width:1px;height:258.74px;background:#d6d6d6"></div>
<div class="a" style="left:525.5px;top:231.9px;width:83px;height:1px;background:#f5e3b8"></div>
<div class="a" style="left:525.5px;top:245.02px;width:83px;height:2px;background:#f0c86a"></div>
<div class="a" style="left:1429px;top:193px;width:11px;height:475px;background:#f1f1f1"></div>
<svg class="a" style="left:1432px;top:237px" width="7" height="4"><path d="M0 4 L3.5 0 L7 4 Z" fill="#a3a3a3"/></svg>
<svg class="a" style="left:1432px;top:659px" width="7" height="4"><path d="M0 0 L3.5 4 L7 0 Z" fill="#a3a3a3"/></svg>
<div class="a" style="left:193px;top:668px;width:1236px;height:12px;background:#f1f1f1"></div>
<div class="a" style="left:1429px;top:668px;width:11px;height:12px;background:#e8e8e8"></div>
<svg class="a" style="left:197.5px;top:671px" width="4" height="6"><path d="M4 0 L0 3 L4 6 Z" fill="#a3a3a3"/></svg>
<svg class="a" style="left:517.5px;top:671px" width="4" height="6"><path d="M0 0 L4 3 L0 6 Z" fill="#8a8a8a"/></svg>
<svg class="a" style="left:529.5px;top:671px" width="4" height="6"><path d="M4 0 L0 3 L4 6 Z" fill="#a3a3a3"/></svg>
<div class="a" style="left:538px;top:669px;width:565px;height:10px;background:#c1c1c1"></div>
<svg class="a" style="left:1421.5px;top:671px" width="4" height="6"><path d="M0 0 L4 3 L0 6 Z" fill="#333"/></svg>
<div class="a" style="left:0;top:680.5px;width:1440px;height:23px;background:#b3b3b3"></div>
<div class="a" style="left:8px;top:687px;font-size:9px;color:#222;line-height:11px">Copyright isolved People Cloud 2021 isolved HCM, LLC</div>
<div class="a" style="left:1407.5px;top:687px;font-size:9px;color:#222;line-height:11px">Demo</div>
</body></html>
